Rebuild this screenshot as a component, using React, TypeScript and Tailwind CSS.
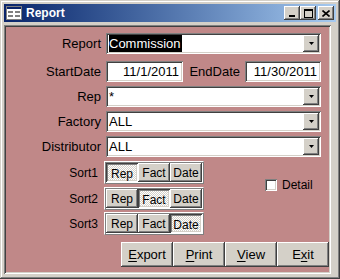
import React from "react";

const raised =
  "shadow-[inset_-1px_-1px_0_#404040,inset_1px_1px_0_#ffffff,inset_-2px_-2px_0_#808080,inset_2px_2px_0_#d4d0c8]";
const pressed =
  "shadow-[inset_1px_1px_0_#404040,inset_-1px_-1px_0_#ffffff,inset_2px_2px_0_#808080,inset_-2px_-2px_0_#d4d0c8]";
const sunken =
  "shadow-[inset_1px_1px_0_#808080,inset_-1px_-1px_0_#ffffff,inset_2px_2px_0_#404040,inset_-2px_-2px_0_#d4d0c8]";

function Combo({ value, selected = false }: { value: string; selected?: boolean }) {
  return (
    <div className={`flex h-[21px] w-[215px] bg-white p-[2px] ${sunken}`}>
      <div className="flex flex-1 items-center pl-[1px] text-[13px] leading-none">
        <span className={selected ? "bg-black py-[2px] pr-[1px] text-white" : "text-black"}>{value}</span>
      </div>
      <div className={`flex w-[16px] items-center justify-center bg-[#d4d0c8] ${raised}`}>
        <svg width="5" height="3" viewBox="0 0 5 3">
          <polygon points="0,0 5,0 2.5,3" fill="#000" />
        </svg>
      </div>
    </div>
  );
}

function TextBox({ value, width }: { value: string; width: string }) {
  return (
    <div className={`flex h-[21px] ${width} items-center justify-end bg-white pr-[4px] text-[13px] ${sunken}`}>
      {value}
    </div>
  );
}

function Row({ label, children, className = "" }: { label: string; children: React.ReactNode; className?: string }) {
  return (
    <div className={`flex items-center ${className}`}>
      <div className="mr-[5px] w-[95px] text-right text-[13px]">{label}</div>
      {children}
    </div>
  );
}

function SortGroup({ label, active, className = "" }: { label: string; active: number; className?: string }) {
  const opts = ["Rep", "Fact", "Date"];
  return (
    <div className={`flex items-center ${className}`}>
      <div className="mr-[6px] w-[92px] text-right text-[12px]">{label}</div>
      <div className="flex h-[23px] w-[100px] border border-t-white border-l-white border-r-[#808080] border-b-[#808080] p-[1px] shadow-[inset_1px_1px_0_#808080,inset_-1px_-1px_0_#ffffff]">
        <div className="flex flex-1">
          {opts.map((o, i) =>
            i === active ? (
              <div
                key={o}
                className={`flex w-[32px] items-center justify-center pt-[2px] text-[12px] bg-[repeating-conic-gradient(#ffffff_0%_25%,#d4d0c8_0%_50%)] bg-[length:2px_2px] ${pressed}`}
              >
                {o}
              </div>
            ) : (
              <div key={o} className={`flex w-[32px] items-center justify-center bg-[#d4d0c8] text-[12px] ${raised}`}>
                {o}
              </div>
            )
          )}
        </div>
      </div>
    </div>
  );
}

function CmdButton({ pre, key1, post }: { pre: string; key1: string; post: string }) {
  return (
    <div className={`flex h-[25px] w-[52px] items-center justify-center bg-[#d4d0c8] text-[13px] ${raised}`}>
      {pre}
      <span className="underline underline-offset-2">{key1}</span>
      {post}
    </div>
  );
}

function TitleButton({ children, className = "" }: { children: React.ReactNode; className?: string }) {
  return (
    <div className={`flex h-[14px] w-[16px] items-center justify-center bg-[#d4d0c8] ${raised} ${className}`}>
      {children}
    </div>
  );
}

export default function App() {
  return (
    <div
      className="flex h-[279px] w-[340px] flex-col bg-[#d4d0c8] p-[4px] text-black shadow-[inset_-1px_-1px_0_#404040,inset_1px_1px_0_#d4d0c8,inset_-2px_-2px_0_#808080,inset_2px_2px_0_#ffffff]"
      style={{ fontFamily: '"Liberation Sans", Arial, sans-serif' }}
    >
      <div className="flex h-[18px] items-center bg-gradient-to-r from-[#0a246a] to-[#a6caf0] pl-[2px] pr-[2px]">
        <svg width="16" height="14" viewBox="0 0 16 14" className="mr-[4px]">
          <rect x="0.5" y="0.5" width="15" height="13" fill="#ffffff" stroke="#808080" />
          <rect x="1" y="1" width="14" height="2" fill="#0a246a" />
          <rect x="2" y="5" width="5" height="2" fill="#808080" />
          <rect x="9" y="5" width="5" height="2" fill="#808080" />
          <rect x="2" y="9" width="5" height="2" fill="#808080" />
          <rect x="9" y="9" width="5" height="2" fill="#808080" />
        </svg>
        <span className="flex-1 text-[12px] font-bold text-white">Report</span>
        <TitleButton>
          <svg width="8" height="8" viewBox="0 0 8 8">
            <rect x="1" y="6" width="6" height="2" fill="#000" />
          </svg>
        </TitleButton>
        <TitleButton>
          <svg width="9" height="9" viewBox="0 0 9 9">
            <rect x="0.5" y="0.5" width="8" height="8" fill="none" stroke="#000" />
            <rect x="0" y="0" width="9" height="2" fill="#000" />
          </svg>
        </TitleButton>
        <TitleButton className="ml-[2px]">
          <svg width="8" height="7" viewBox="0 0 8 7">
            <path d="M0.5 0.5L7.5 6.5M7.5 0.5L0.5 6.5" stroke="#000" strokeWidth="1.6" />
          </svg>
        </TitleButton>
      </div>

      <div className="h-[3px]" />

      <div className={`mr-[5px] mb-[1px] flex flex-1 flex-col bg-[#c08888] p-[2px] ${sunken}`}>
        <Row label="Report" className="mt-[6px]">
          <Combo value="Commission" selected />
        </Row>
        <Row label="StartDate" className="mt-[7px]">
          <TextBox value="11/1/2011" width="w-[77px]" />
          <div className="w-[62px] pr-[5px] text-right text-[13px]">EndDate</div>
          <TextBox value="11/30/2011" width="w-[76px]" />
        </Row>
        <Row label="Rep" className="mt-[4px]">
          <Combo value="*" />
        </Row>
        <Row label="Factory" className="mt-[4px]">
          <Combo value="ALL" />
        </Row>
        <Row label="Distributor" className="mt-[4px]">
          <Combo value="ALL" />
        </Row>

        <div className="mt-[4px] flex">
          <div className="flex flex-col">
            <SortGroup label="Sort1" active={0} />
            <SortGroup label="Sort2" active={1} className="mt-[3px]" />
            <SortGroup label="Sort3" active={2} className="mt-[2px]" />
          </div>
          <div className="ml-[61px] mt-[18px] flex h-[12px] items-center">
            <div className={`h-[12px] w-[12px] bg-white ${sunken}`} />
            <span className="ml-[5px] text-[12px]">Detail</span>
          </div>
        </div>

        <div className="ml-[115px] mt-[7px] flex">
          <CmdButton pre="" key1="E" post="xport" />
          <CmdButton pre="" key1="P" post="rint" />
          <CmdButton pre="" key1="V" post="iew" />
          <CmdButton pre="E" key1="x" post="it" />
        </div>
      </div>
    </div>
  );
}
